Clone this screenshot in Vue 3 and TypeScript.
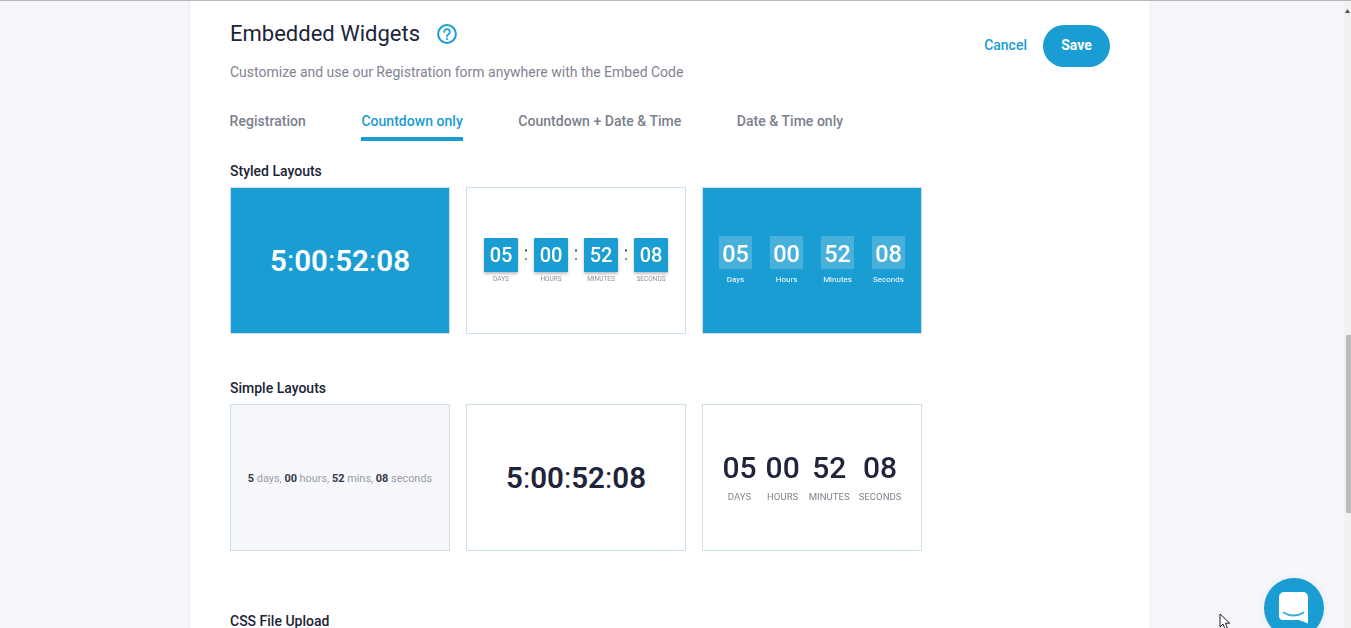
<script setup lang="ts">
const tabs = ['Registration', 'Countdown only', 'Countdown + Date & Time', 'Date & Time only']
const active = 'Countdown only'
const boxes = [
  { value: '05', label: 'Days' },
  { value: '00', label: 'Hours' },
  { value: '52', label: 'Minutes' },
  { value: '08', label: 'Seconds' },
]
const clock = ['5', '00', '52', '08']
</script>

<template>
  <div class="page">
    <main class="card">
      <header class="head">
        <div>
          <div class="title-row">
            <h1>Embedded Widgets</h1>
            <svg class="help" width="20" height="20" viewBox="0 0 20 20" fill="none">
              <circle cx="10" cy="10" r="8.9" stroke="#1a9dd2" stroke-width="2" />
              <path d="M7.2 7.9a2.8 2.8 0 1 1 4.4 2.3c-1 .7-1.6 1.2-1.6 2.4" stroke="#1a9dd2" stroke-width="1.8" stroke-linecap="round" />
              <circle cx="10" cy="15" r="1.1" fill="#1a9dd2" />
            </svg>
          </div>
          <p class="sub">Customize and use our Registration form anywhere with the Embed Code</p>
        </div>
        <div class="actions">
          <button class="cancel">Cancel</button>
          <button class="save">Save</button>
        </div>
      </header>

      <nav class="tabs">
        <a v-for="t in tabs" :key="t" class="tab" :class="{ on: t === active }">{{ t }}</a>
      </nav>

      <h2 class="section first">Styled Layouts</h2>
      <div class="grid">
        <div class="tile blue">
          <span class="big white"><template v-for="(c, i) in clock" :key="c"><span v-if="i > 0" class="sep">:</span>{{ c }}</template></span>
        </div>
        <div class="tile">
          <div class="flip">
            <template v-for="(b, i) in boxes" :key="b.label">
              <span v-if="i > 0" class="colon"><i /><i /></span>
              <div class="flip-unit">
                <span class="flip-box">{{ b.value }}</span>
                <span class="flip-label">{{ b.label }}</span>
              </div>
            </template>
          </div>
        </div>
        <div class="tile blue">
          <div class="soft">
            <div v-for="b in boxes" :key="b.label" class="soft-unit">
              <span class="soft-box">{{ b.value }}</span>
              <span class="soft-label">{{ b.label }}</span>
            </div>
          </div>
        </div>
      </div>

      <h2 class="section second">Simple Layouts</h2>
      <div class="grid">
        <div class="tile pale">
          <span class="inline"><b>5</b> days, <b>00</b> hours, <b>52</b> mins, <b>08</b> seconds</span>
        </div>
        <div class="tile">
          <span class="big dark"><template v-for="(c, i) in clock" :key="c"><span v-if="i > 0" class="sep">:</span>{{ c }}</template></span>
        </div>
        <div class="tile">
          <div class="plain">
            <div v-for="b in boxes" :key="b.label" class="plain-unit">
              <span class="plain-num">{{ b.value }}</span>
              <span class="plain-label">{{ b.label }}</span>
            </div>
          </div>
        </div>
      </div>

      <h2 class="section third">CSS File Upload</h2>
    </main>

    <div class="scrollbar">
      <svg class="arrow" width="5" height="4" viewBox="0 0 5 4"><path d="M2.5 0 5 4H0z" fill="#505050" /></svg>
      <div class="thumb" />
    </div>

    <svg class="cursor" width="13" height="17" viewBox="0 0 13 17">
      <path d="M1 1v13l3-3 2 5 2.4-1-2-4.800h4.300z" fill="#fff" stroke="#1c1c28" stroke-width="1" />
    </svg>

    <div class="chat">
      <svg width="30" height="32" viewBox="0 0 30 32">
        <path d="M5 0h19a5 5 0 0 1 5 5v26.500l-9-3.500H4a4 4 0 0 1-4-4V5a5 5 0 0 1 5-5z" fill="#fff" />
        <path d="M4.500 20.500c6 4 14 4 20 0" fill="none" stroke="#1a9dd2" stroke-width="1.800" stroke-linecap="round" opacity=".85" />
      </svg>
    </div>
  </div>
</template>

<style>
html,
body {
  margin: 0;
  overflow: hidden;
  background: #f5f7fb;
}
</style>

<style scoped>
.page {
  position: relative;
  box-sizing: border-box;
  width: 1351px;
  height: 628px;
  overflow: hidden;
  background: #f5f7fb;
  border-top: 1px solid #b6b6bc;
  font-family: Roboto, "Liberation Sans", sans-serif;
}
.card {
  box-sizing: border-box;
  width: 960px;
  height: 700px;
  margin-left: 190px;
  padding: 0 40px;
  background: #fff;
  box-shadow: 0 0 2px rgba(60, 70, 100, 0.18);
}
.head {
  display: flex;
  justify-content: space-between;
}
.title-row {
  display: flex;
  align-items: center;
  gap: 17px;
  height: 24px;
  margin-top: 20px;
}
h1 {
  margin: 0;
  font-size: 22px;
  font-weight: 400;
  color: #20243a;
  white-space: nowrap;
}
.help {
  margin-top: 2px;
}
.sub {
  margin: 15px 0 0;
  font-size: 14px;
  line-height: 24px;
  color: #7f8492;
}
.actions {
  display: flex;
  align-items: center;
  gap: 16px;
  height: 42px;
  margin-top: 24px;
}
button {
  border: 0;
  padding: 0 0 2px;
  font-family: inherit;
  font-size: 14px;
}
.cancel {
  background: none;
  color: #1a9dd2;
  font-weight: 500;
}
.save {
  width: 67px;
  height: 42px;
  border-radius: 21px;
  background: #1a9dd2;
  color: #fff;
  font-weight: 700;
}
.tabs {
  display: flex;
  gap: 55.500px;
  margin-top: 25px;
  margin-left: -0.400px;
}
.tab {
  padding-bottom: 4px;
  border-bottom: 4px solid transparent;
  font-size: 14px;
  line-height: 24px;
  font-weight: 500;
  letter-spacing: 0.030px;
  color: #7a7f8e;
  white-space: nowrap;
}
.tab.on {
  color: #1a9dd2;
  border-bottom-color: #1a9dd2;
}
.section {
  margin: 0 0 6px;
  font-size: 14px;
  line-height: 20px;
  font-weight: 500;
  color: #20243a;
}
.section.first {
  margin-top: 20px;
}
.section.second {
  margin-top: 44px;
}
.section.third {
  margin-top: 60px;
}
.grid {
  display: flex;
  gap: 16px;
}
.tile {
  box-sizing: border-box;
  display: flex;
  align-items: center;
  justify-content: center;
  width: 220px;
  height: 147px;
  border: 1px solid #cfdfe9;
  background: #fff;
}
.tile.blue {
  background: #1a9dd2;
}
.tile.pale {
  background: #f5f7fb;
}
.big {
  font-size: 29.500px;
  font-weight: 600;
}
.sep {
  margin: 0 0.100px;
  font-weight: 400;
}
.white {
  color: #fff;
}
.dark {
  color: #20243a;
}
.flip,
.soft,
.plain {
  filter: blur(0.3px);
}
.flip {
  display: flex;
  align-items: flex-start;
  margin-top: -1px;
}
.flip-unit {
  display: flex;
  flex-direction: column;
  align-items: center;
  width: 34px;
}
.flip-box {
  width: 34px;
  height: 34px;
  border-radius: 1px;
  background: #1a9dd2;
  box-shadow: 0 2px 3px rgba(30, 40, 60, 0.3);
  color: #fff;
  font-size: 20px;
  font-weight: 500;
  line-height: 34px;
  text-align: center;
}
.flip-label {
  margin-top: 3px;
  font-size: 6.500px;
  line-height: 8px;
  color: #8b8f9c;
  text-transform: uppercase;
  white-space: nowrap;
}
.colon {
  display: flex;
  flex-direction: column;
  align-items: center;
  justify-content: center;
  gap: 6px;
  width: 16px;
  height: 34px;
}
.colon i {
  width: 2.500px;
  height: 2.500px;
  border-radius: 50%;
  background: #666b78;
}
.soft {
  display: flex;
  gap: 18px;
}
.soft-unit {
  display: flex;
  flex-direction: column;
  align-items: center;
  width: 33px;
}
.soft-box {
  width: 33px;
  height: 33px;
  border-radius: 1px;
  background: rgba(255, 255, 255, 0.2);
  color: #fff;
  font-size: 23.500px;
  font-weight: 500;
  line-height: 36px;
  text-align: center;
}
.soft-label {
  margin-top: 6px;
  font-size: 8px;
  line-height: 10px;
  color: #fff;
  white-space: nowrap;
}
.inline {
  margin-top: 1px;
  font-size: 10.900px;
  color: #9a9ca6;
  white-space: nowrap;
}
.inline b {
  font-weight: 700;
  color: #33364a;
}
.plain {
  display: flex;
  gap: 9px;
}
.plain-unit {
  display: flex;
  flex-direction: column;
  align-items: center;
}
.plain-num {
  font-size: 30px;
  line-height: 30px;
  font-weight: 500;
  color: #20243a;
}
.plain-label {
  margin-top: 8px;
  font-size: 9.600px;
  line-height: 12px;
  color: #80848f;
  text-transform: uppercase;
  white-space: nowrap;
}
.scrollbar {
  position: absolute;
  top: 0;
  right: 0;
  width: 7px;
  height: 100%;
  background: #f1f1f1;
}
.arrow {
  position: absolute;
  top: 8px;
  left: 1px;
}
.thumb {
  position: absolute;
  top: 334px;
  right: 0;
  width: 5px;
  height: 178px;
  background: #bcbcbc;
}
.cursor {
  position: absolute;
  left: 1219px;
  top: 612px;
}
.chat {
  position: absolute;
  left: 1264px;
  top: 577px;
  display: flex;
  justify-content: center;
  box-sizing: border-box;
  width: 60px;
  height: 60px;
  padding-top: 14px;
  border-radius: 50%;
  background: #1a9dd2;
  box-shadow: 0 1px 10px rgba(60, 70, 100, 0.08);
}
</style>
